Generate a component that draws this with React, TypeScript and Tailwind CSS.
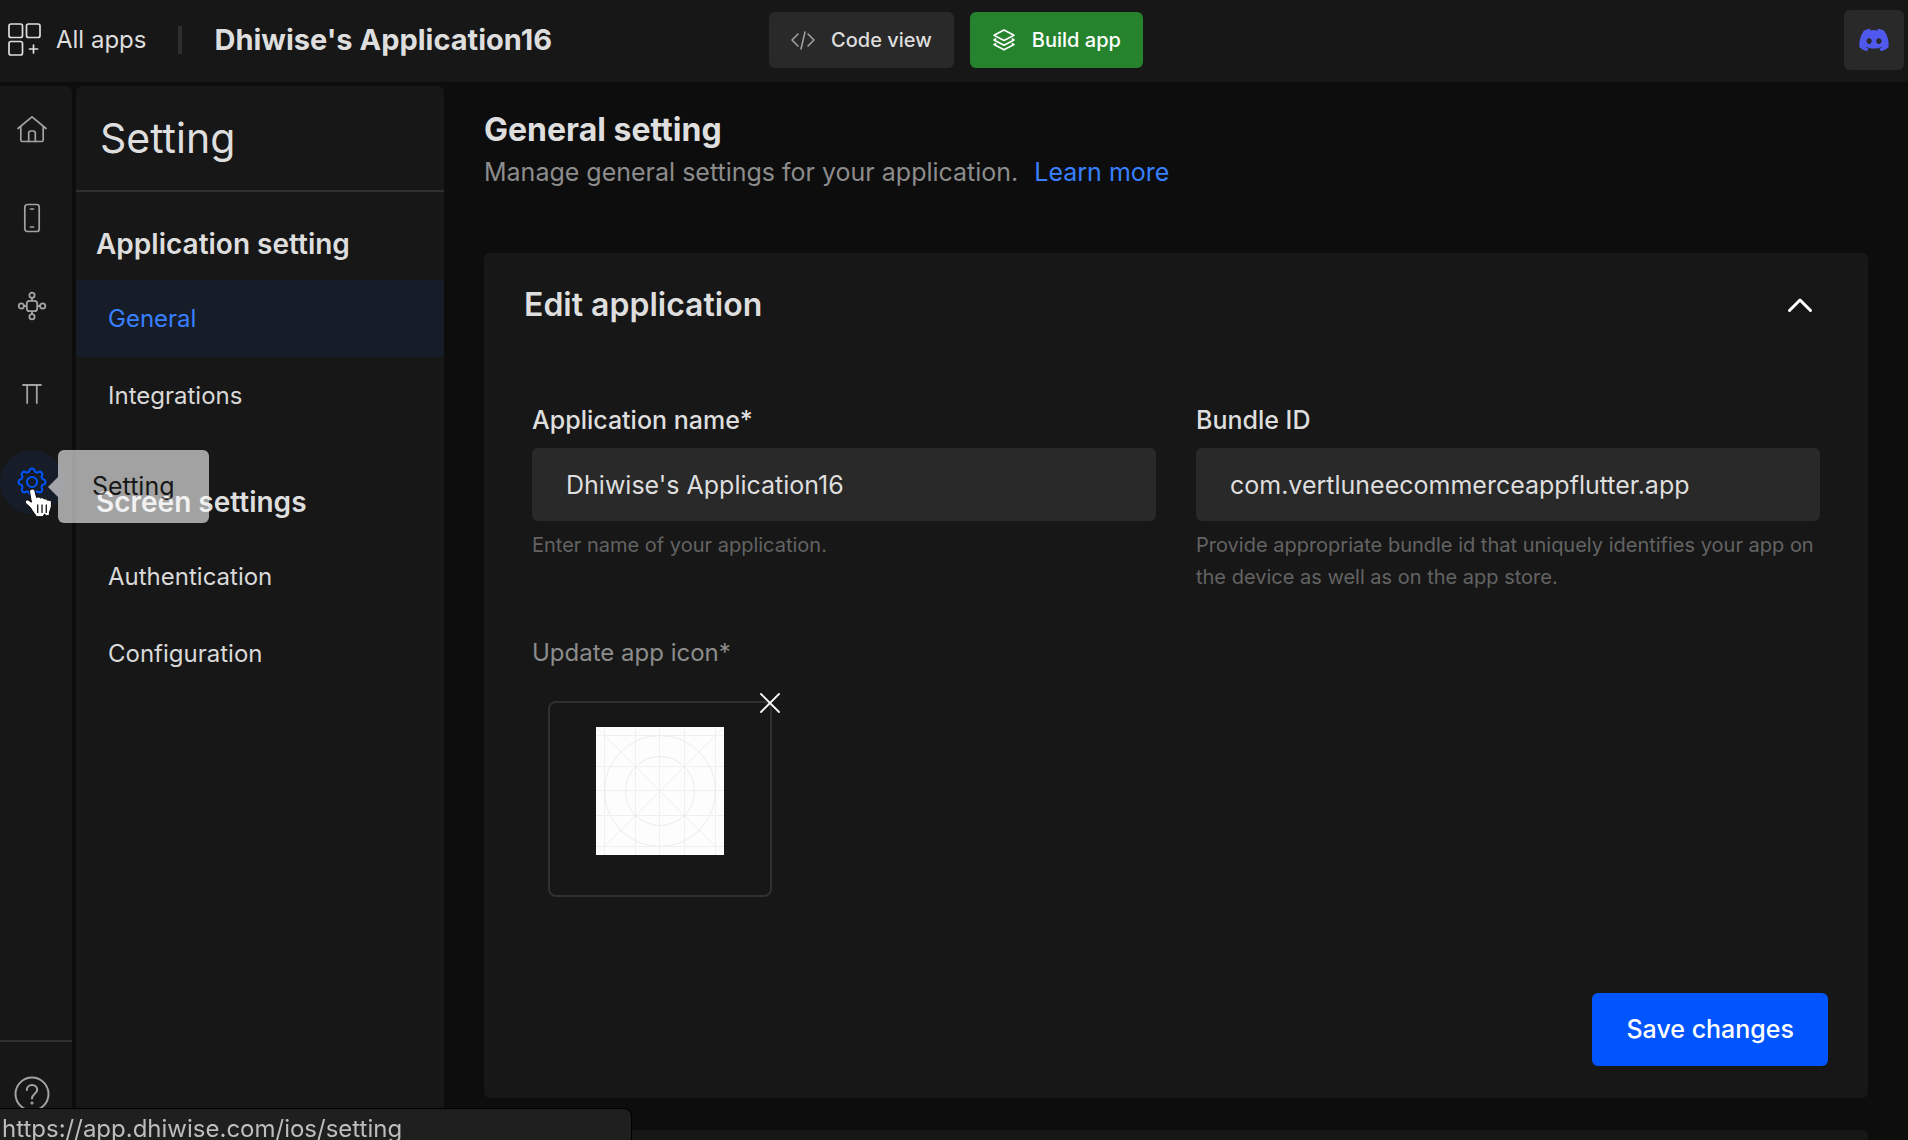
import { useState } from "react";
import type { ReactNode } from "react";
import { FaDiscord } from "react-icons/fa";

function AppsIcon() {
  return (
    <svg width="34" height="34" viewBox="0 0 34 34" fill="none" stroke="currentColor" strokeWidth="1.7" strokeLinecap="round">
      <rect x="1" y="1" width="13.5" height="13.5" rx="2" />
      <rect x="18.5" y="1" width="13.5" height="13.5" rx="2" />
      <rect x="1" y="18.5" width="13.5" height="13.5" rx="2" />
      <path d="M25.5 22v8M21.5 26h8" />
    </svg>
  );
}

function CodeIcon() {
  return (
    <svg width="24" height="24" viewBox="0 0 24 24" fill="none" stroke="currentColor" strokeWidth="1.5" strokeLinecap="round" strokeLinejoin="round">
      <path d="M7 6 1 12l6 6M17 6l6 6-6 6M14 4l-4 17" />
    </svg>
  );
}

function LayersIcon() {
  return (
    <svg width="24" height="24" viewBox="0 0 24 24" fill="none" stroke="currentColor" strokeWidth="1.7" strokeLinejoin="round" strokeLinecap="round">
      <path d="M12 2 22 7.2 12 12.4 2 7.2z" />
      <path d="m3.6 11-1.6 1 10 5.2L22 12l-1.6-1" />
      <path d="m3.6 15.6-1.6 1 10 5.2 10-5.2-1.6-1" />
    </svg>
  );
}

function HomeIcon() {
  return (
    <svg width="32" height="32" viewBox="0 0 32 32" fill="none" stroke="currentColor" strokeWidth="1.7" strokeLinecap="round" strokeLinejoin="round">
      <path d="M2 14.5 16 2.800l14 11.700M4.800 12.500V26q0 1.500 1.500 1.500h19.400q1.500 0 1.500-1.500V12.500" />
      <path d="M12.700 27.500V19q0-2 2-2h2.600q2 0 2 2v8.500" />
    </svg>
  );
}

function PhoneIcon() {
  return (
    <svg width="32" height="32" viewBox="0 0 32 32" fill="none" stroke="currentColor" strokeWidth="1.7" strokeLinecap="round">
      <rect x="8.8" y="2.5" width="14.4" height="27" rx="2.5" />
      <path d="M14.5 7h3M14.5 25h3" />
    </svg>
  );
}

function NodesIcon() {
  return (
    <svg width="32" height="32" viewBox="0 0 32 32" fill="none" stroke="currentColor" strokeWidth="1.8">
      <rect x="10.8" y="10.8" width="10.4" height="10.4" rx="2.8" />
      <circle cx="16" cy="5.3" r="2.6" />
      <circle cx="16" cy="26.7" r="2.6" />
      <circle cx="5.3" cy="16" r="2.6" />
      <circle cx="26.7" cy="16" r="2.6" />
      <path d="M16 8v3M16 21v3M8 16h3M21 16h3" />
    </svg>
  );
}

function PiIcon() {
  return (
    <svg width="32" height="32" viewBox="0 0 32 32" fill="none" stroke="currentColor" strokeWidth="1.8" strokeLinecap="round">
      <path d="M7 7h18M11.2 7v18M20.8 7v18" />
    </svg>
  );
}

function GearIcon() {
  return (
    <svg width="36" height="36" viewBox="0 0 24 24" fill="none" stroke="currentColor" strokeWidth="1.3" strokeLinejoin="round">
      <path d="M10.325 4.317c.426-1.756 2.924-1.756 3.35 0a1.724 1.724 0 002.573 1.066c1.543-.94 3.31.826 2.37 2.37a1.724 1.724 0 001.065 2.572c1.756.426 1.756 2.924 0 3.35a1.724 1.724 0 00-1.066 2.573c.94 1.543-.826 3.31-2.37 2.37a1.724 1.724 0 00-2.572 1.065c-.426 1.756-2.924 1.756-3.35 0a1.724 1.724 0 00-2.573-1.066c-1.543.94-3.31-.826-2.37-2.37a1.724 1.724 0 00-1.065-2.572c-1.756-.426-1.756-2.924 0-3.35a1.724 1.724 0 001.066-2.573c-.94-1.543.826-3.31 2.37-2.37.996.608 2.296.07 2.572-1.065z" />
      <circle cx="12" cy="12" r="3.4" />
    </svg>
  );
}

function HelpIcon() {
  return (
    <svg width="36" height="36" viewBox="0 0 36 36" fill="none" stroke="currentColor" strokeWidth="2" strokeLinecap="round">
      <circle cx="18" cy="18" r="16.5" />
      <path d="M12.8 14c0-3 2.300-5 5.200-5s5.200 2 5.200 4.800c0 4-5.200 4-5.200 8.700" />
      <circle cx="18" cy="27" r=".6" fill="currentColor" />
    </svg>
  );
}

function HandCursor() {
  return (
    <svg width="32" height="34" viewBox="0 0 32 34">
      <path
        d="M8.300 3c1.500 0 2.400.9 2.700 2.300l1.600 6.200c1-.8 3.200-.7 4 .6 1.200-.7 3-.3 3.600.9 1.300-.5 2.800.1 3.300 1.300 2-.7 4 .3 4 2.600 0 3.400-.5 5.600-1.500 7.800-.7 1.600-.8 3-.7 5h-3l-1.800-1.600-1.500 2.600h-6.500c-1.200-2.300-3-4-4.400-6.400C6.800 21.800 5 19.800 2.600 18.200.2 16.200 1.600 13 4.400 14.200l3 2L5.600 6C5.300 4.200 6.600 3 8.300 3z"
        fill="#fff"
        stroke="#000"
        strokeWidth="1"
        strokeLinejoin="round"
      />
      <path d="M13.700 18.500v8.500M18 18.500v8.500M22.300 18.500v8.500" stroke="#222" strokeWidth="1.400" fill="none" />
    </svg>
  );
}

function IconGrid() {
  return (
    <svg width="128" height="128" viewBox="0 0 128 128" fill="none" stroke="#f0f0f0" strokeWidth="1" role="img" aria-label="App icon">
      <rect width="128" height="128" fill="#fdfdfd" stroke="none" />
      <path d="M8.5 0v128M39.5 0v128M63.5 0v128M88.5 0v128M119.5 0v128M0 8.5h128M0 39.5h128M0 63.5h128M0 88.5h128M0 119.5h128M0 0l128 128M128 0 0 128" />
      <circle cx="64" cy="64" r="55.5" stroke="#ececec" />
      <circle cx="64" cy="64" r="34.5" stroke="#ececec" />
    </svg>
  );
}

function RailButton({ label, active, children }: { label: string; active?: boolean; children: ReactNode }) {
  return (
    <button
      type="button"
      aria-label={label}
      className={
        active
          ? "flex size-16 items-center justify-center rounded-full bg-[#161d29] text-[#0055ff]"
          : "flex size-16 items-center justify-center rounded-full text-[#a3a3a3]"
      }
    >
      {children}
    </button>
  );
}

function NavItem({ label, active }: { label: string; active?: boolean }) {
  return (
    <a
      href="#"
      className={
        active
          ? "block bg-[#161d29] px-8 py-5 text-2xl leading-[37px] text-[#3880ff]"
          : "block px-8 py-5 text-2xl leading-[37px] text-[#d9d9d9]"
      }
    >
      {label}
    </a>
  );
}

function Field({ id, label, value, hint }: { id: string; label: string; value: string; hint: string }) {
  const [text, setText] = useState(value);
  return (
    <div className="min-w-0 flex-1">
      <label htmlFor={id} className="block text-[25px] leading-8 font-medium text-[#dedede]">
        {label}
      </label>
      <input
        id={id}
        value={text}
        onChange={(e) => setText(e.target.value)}
        className="mt-3 h-[73px] w-full rounded-md bg-[#292929] px-[34px] text-[25px] text-[#dedede] outline-none"
      />
      <p className="mt-2 text-xl leading-8 text-[#636363]">{hint}</p>
    </div>
  );
}

export default function App() {
  return (
    <div className="flex h-screen flex-col gap-1 overflow-hidden bg-[#0d0d0d] font-['Inter',sans-serif] text-[#dedede]">
      <header className="grid h-[82px] shrink-0 grid-cols-[1fr_auto_1fr] items-center bg-[#171717] pr-1 pb-0.5 pl-2">
        <div className="flex items-center">
          <a href="#" className="flex items-center gap-3.5 text-2xl">
            <AppsIcon />
            All apps
          </a>
          <span className="ml-8 h-7 w-1 bg-[#2e2e2e]" />
          <h1 className="ml-8 text-[29px] leading-10 font-bold">Dhiwise's Application16</h1>
        </div>
        <div className="flex gap-4">
          <button type="button" className="flex h-14 items-center gap-4 rounded-md bg-[#292929] px-[22px] text-xl font-medium">
            <span className="text-[#a3a3a3]">
              <CodeIcon />
            </span>
            Code view
          </button>
          <button type="button" className="flex h-14 items-center gap-4 rounded-md bg-[#25822d] px-[22px] text-xl font-medium text-white">
            <LayersIcon />
            Build app
          </button>
        </div>
        <button type="button" aria-label="Discord" className="flex size-[60px] items-center justify-center justify-self-end rounded-md bg-[#292929] text-[#5059ee]">
          <FaDiscord size={32} />
        </button>
      </header>

      <div className="flex min-h-0 flex-1 gap-1">
        <nav aria-label="Main" className="flex w-[72px] shrink-0 flex-col justify-between rounded-tr-md bg-[#171717]">
          <div className="flex flex-col gap-6 pt-3">
            <RailButton label="Home">
              <HomeIcon />
            </RailButton>
            <RailButton label="Screens">
              <PhoneIcon />
            </RailButton>
            <RailButton label="API">
              <NodesIcon />
            </RailButton>
            <RailButton label="Constants">
              <PiIcon />
            </RailButton>
            <div className="relative">
              <RailButton label="Setting" active>
                <GearIcon />
              </RailButton>
              <div className="absolute top-0 left-12 z-10 flex items-center opacity-60">
                <span className="h-0 w-0 border-y-10 border-r-10 border-y-transparent border-r-white" />
                <span role="tooltip" className="rounded-md bg-white px-[34px] py-5 text-[25px] leading-[33px] text-[#181818]">
                  Setting
                </span>
              </div>
              <div className="pointer-events-none absolute top-9 left-6 z-20">
                <HandCursor />
              </div>
            </div>
          </div>
          <div className="border-t-2 border-[#303030] px-3.5 pt-[34px] pb-7">
            <button type="button" aria-label="Help" className="block text-[#a3a3a3]">
              <HelpIcon />
            </button>
          </div>
        </nav>

        <aside className="w-[368px] shrink-0 rounded-t-md bg-[#171717]">
          <h2 className="border-b-2 border-[#303030] px-6 py-7 text-[41px] leading-12">Setting</h2>
          <h3 className="px-5 pt-8 pb-4 text-[28px] leading-10 font-semibold">Application setting</h3>
          <NavItem label="General" active />
          <NavItem label="Integrations" />
          <h3 className="px-5 pt-12 pb-4 text-[28px] leading-10 font-semibold">Screen settings</h3>
          <NavItem label="Authentication" />
          <NavItem label="Configuration" />
        </aside>

        <main className="min-w-0 flex-1 overflow-hidden pr-10 pl-9">
          <h2 className="pt-6 text-[32px] leading-10 font-bold">General setting</h2>
          <p className="mt-0.5 text-[25px] leading-10 text-[#8c8c8c]">
            Manage general settings for your application.
            <a href="#" className="ml-4 text-[#3880ff]">
              Learn more
            </a>
          </p>

          <section className="mt-[61px] rounded-md bg-[#171717] px-10 py-8">
            <div className="flex items-center justify-between pr-2.5">
              <h3 className="text-[32px] leading-10 font-semibold">Edit application</h3>
              <button type="button" aria-label="Collapse" className="text-white">
                <svg width="36" height="36" viewBox="0 0 36 36" fill="none" stroke="currentColor" strokeWidth="3" strokeLinecap="round" strokeLinejoin="round" className="block">
                  <path d="M7.5 23.5 18 13l10.5 10.5" />
                </svg>
              </button>
            </div>
            <form className="px-2 pt-[79px]" onSubmit={(e) => e.preventDefault()}>
              <div className="flex gap-10">
                <Field id="app-name" label="Application name*" value="Dhiwise's Application16" hint="Enter name of your application." />
                <Field
                  id="bundle-id"
                  label="Bundle ID"
                  value="com.vertluneecommerceappflutter.app"
                  hint="Provide appropriate bundle id that uniquely identifies your app on the device as well as on the app store."
                />
              </div>
              <p className="mt-11 text-2xl leading-8 text-[#8c8c8c]">Update app icon*</p>
              <div className="relative mt-8 ml-4 flex h-[196px] w-56 justify-center rounded-lg border-2 border-[#303030] pt-6">
                <IconGrid />
                <button type="button" aria-label="Remove icon" className="absolute -top-3 -right-3 text-white">
                  <svg width="24" height="24" viewBox="0 0 24 24" fill="none" stroke="currentColor" strokeWidth="1.8" strokeLinecap="round" className="block">
                    <path d="m3 3 18 18M21 3 3 21" />
                  </svg>
                </button>
              </div>
              <div className="-mr-2 flex justify-end pt-24">
                <button type="submit" className="h-[73px] rounded-md bg-[#0055ff] px-[34px] text-[25px] font-medium text-white">
                  Save changes
                </button>
              </div>
            </form>
          </section>
          <section className="mt-8 h-40 rounded-md bg-[#171717]" />
        </main>
      </div>

      <div className="fixed bottom-0 left-0 h-8 w-[632px] rounded-tr-lg border-t border-r border-black bg-[#1f1f20] pt-1 pl-0.5 text-2xl leading-8 text-[#bdbdbd]">
        https://app.dhiwise.com/ios/setting
      </div>
    </div>
  );
}
